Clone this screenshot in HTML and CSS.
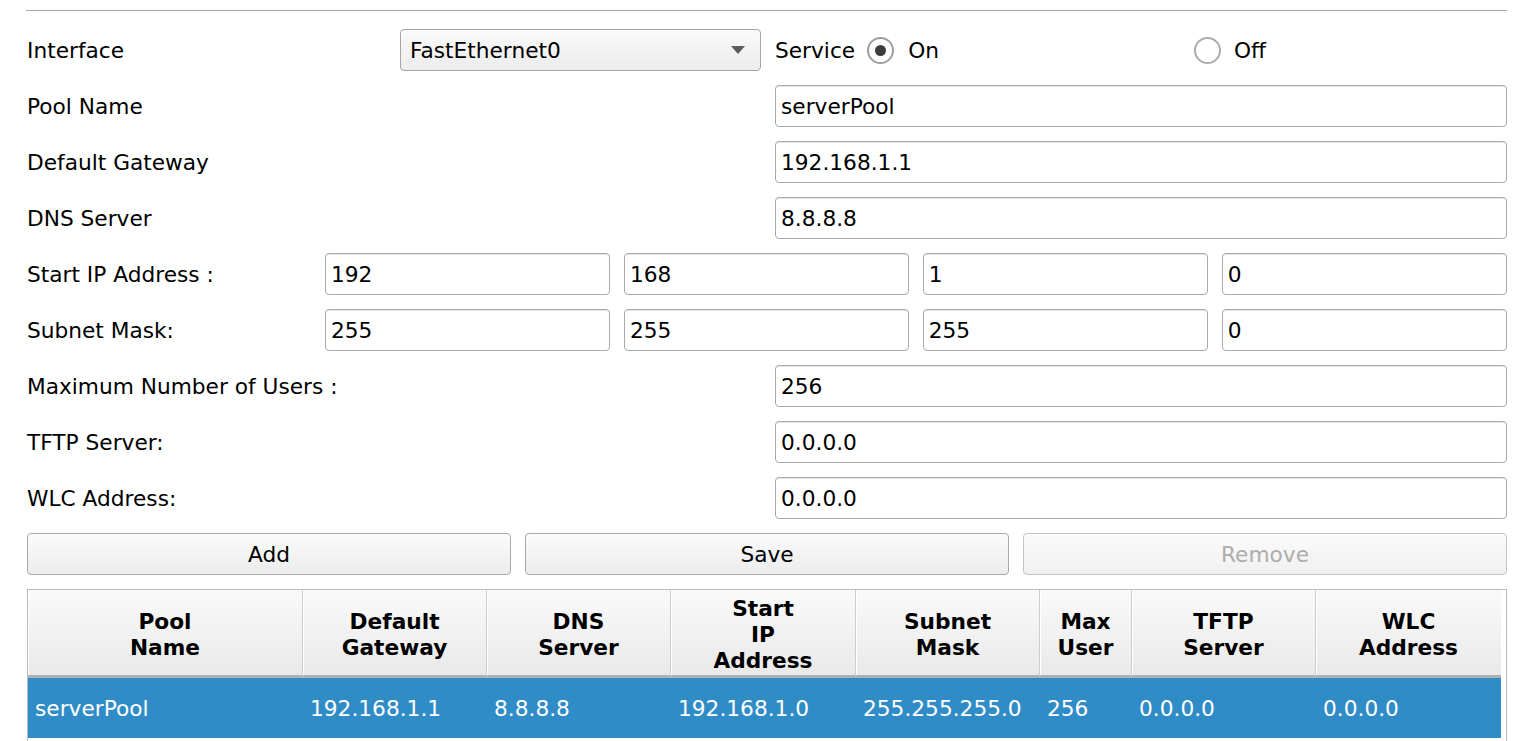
FILE: index.html
```html
<!DOCTYPE html>
<html>
<head>
<meta charset="utf-8">
<link rel="stylesheet" href="styles.css">
</head>
<body>
<div class="panel">
  <div class="rule"></div>
  <div class="form">
    <div class="row row-iface">
      <span class="label">Interface</span>
      <div class="select">
        <span>FastEthernet0</span>
        <svg class="caret" width="14" height="8" viewBox="0 0 14 8"><polygon points="0,0 14,0 7,8" fill="#5e5e5e"/></svg>
      </div>
      <div class="service">
        <span class="label">Service</span>
        <span class="radio checked"><span class="circle"><span class="dot"></span></span>On</span>
        <span class="radio radio-off"><span class="circle"></span>Off</span>
      </div>
    </div>
    <div class="row row-wide"><span class="label">Pool Name</span><div class="field">serverPool</div></div>
    <div class="row row-wide"><span class="label">Default Gateway</span><div class="field">192.168.1.1</div></div>
    <div class="row row-wide"><span class="label">DNS Server</span><div class="field">8.8.8.8</div></div>
    <div class="row row-quad"><span class="label">Start IP Address :</span><div class="field">192</div><div class="field">168</div><div class="field">1</div><div class="field">0</div></div>
    <div class="row row-quad"><span class="label">Subnet Mask:</span><div class="field">255</div><div class="field">255</div><div class="field">255</div><div class="field">0</div></div>
    <div class="row row-wide"><span class="label">Maximum Number of Users :</span><div class="field">256</div></div>
    <div class="row row-wide"><span class="label">TFTP Server:</span><div class="field">0.0.0.0</div></div>
    <div class="row row-wide"><span class="label">WLC Address:</span><div class="field">0.0.0.0</div></div>
    <div class="row row-buttons">
      <div class="button">Add</div>
      <div class="button">Save</div>
      <div class="button disabled">Remove</div>
    </div>
  </div>
  <div class="table">
    <div class="grid">
      <div class="th">Pool<br>Name</div>
      <div class="th">Default<br>Gateway</div>
      <div class="th">DNS<br>Server</div>
      <div class="th">Start<br>IP<br>Address</div>
      <div class="th">Subnet<br>Mask</div>
      <div class="th">Max<br>User</div>
      <div class="th">TFTP<br>Server</div>
      <div class="th last">WLC<br>Address</div>
      <div class="td">serverPool</div>
      <div class="td">192.168.1.1</div>
      <div class="td">8.8.8.8</div>
      <div class="td">192.168.1.0</div>
      <div class="td">255.255.255.0</div>
      <div class="td">256</div>
      <div class="td">0.0.0.0</div>
      <div class="td">0.0.0.0</div>
    </div>
  </div>
</div>
</body>
</html>
```

FILE: styles.css
```css
html, body {
  margin: 0;
  padding: 0;
  background: #ffffff;
}
body {
  font-family: "DejaVu Sans", "Noto Sans", sans-serif;
  font-size: 21.7px;
  color: #000;
  height: 741px;
  overflow: hidden;
}
.panel {
  padding: 10px 17px 0 27px;
}
.rule {
  height: 1px;
  background: #a8a8a8;
  margin-left: -1px;
}
.form {
  margin-top: 18px;
  display: flex;
  flex-direction: column;
  gap: 14px;
}
.row {
  height: 42px;
  display: grid;
  align-items: center;
}
.row-iface {
  grid-template-columns: 359px 361px 1fr;
  column-gap: 14px;
}
.row-wide {
  grid-template-columns: 748px 1fr;
}
.row-quad {
  grid-template-columns: 284.5px repeat(4, 1fr);
  column-gap: 13.5px;
}
.row-quad .label {
  margin-right: -13.5px;
}
.row-buttons {
  grid-template-columns: repeat(3, 1fr);
  column-gap: 14px;
}
.label {
  white-space: nowrap;
}
.field {
  height: 42px;
  box-sizing: border-box;
  border: 1px solid #a9a9a9;
  border-radius: 4px;
  background: #fff;
  box-shadow: inset 0 2px 1px -1px #e4e4e4;
  padding: 0 5px;
  display: flex;
  align-items: center;
  white-space: nowrap;
}
.select {
  height: 42px;
  box-sizing: border-box;
  border: 1px solid #a6a6a6;
  border-radius: 4px;
  background: linear-gradient(#fafafa, #ececec);
  padding: 0 15px 0 9px;
  display: flex;
  align-items: center;
  justify-content: space-between;
}
.caret {
  display: block;
}
.service {
  display: flex;
  align-items: center;
  height: 42px;
}
.radio {
  display: flex;
  align-items: center;
  gap: 14px;
  margin-left: 12px;
}
.radio-off {
  margin-left: 255px;
  gap: 13px;
}
.circle {
  width: 27px;
  height: 27px;
  box-sizing: border-box;
  border: 2px solid #ababab;
  border-radius: 50%;
  background: #fff;
  display: flex;
  align-items: center;
  justify-content: center;
}
.checked .circle {
  border-color: #9e9e9e;
}
.dot {
  width: 11px;
  height: 11px;
  border-radius: 50%;
  background: #3c3c3c;
}
.button {
  height: 42px;
  box-sizing: border-box;
  border: 1px solid #a9a9a9;
  border-radius: 4px;
  background: linear-gradient(#fbfbfb, #ececec);
  display: flex;
  align-items: center;
  justify-content: center;
}
.button.disabled {
  color: #adadad;
  border-color: #c4c4c4;
  background: linear-gradient(#fbfbfb, #f0f0f0);
}
.table {
  margin-top: 14px;
  border: 1px solid #bcbcbc;
  border-bottom: none;
  padding-right: 6px;
  height: 160px;
  box-sizing: border-box;
  overflow: hidden;
}
.grid {
  display: grid;
  grid-template-columns: 275px 184px 184px 185px 184px 92px 184px 185px;
}
.th {
  height: 88px;
  box-sizing: border-box;
  padding-top: 4px;
  border-bottom: 3px solid #b0b0b0;
  border-right: 1px solid #cdcdcd;
  box-shadow: inset 1px 0 0 #ffffff;
  background: linear-gradient(#fafafa, #e9e9e9);
  font-weight: bold;
  line-height: 26px;
  text-align: center;
  display: flex;
  align-items: center;
  justify-content: center;
}
.th.last {
  border-right: none;
}
.td {
  height: 60px;
  background: #308cc6;
  color: #fff;
  padding-left: 7px;
  display: flex;
  align-items: center;
  white-space: nowrap;
}
```
